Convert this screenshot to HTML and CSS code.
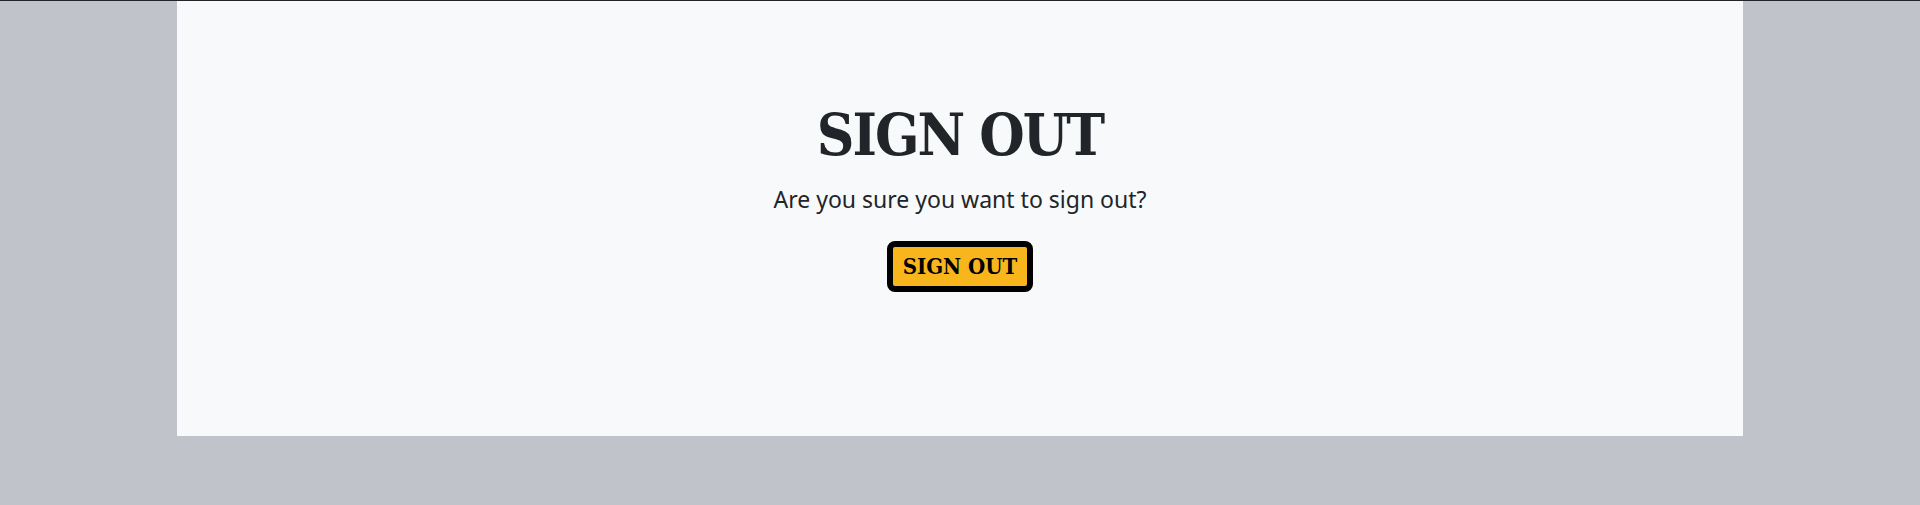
FILE: index.html
```html
<!DOCTYPE html>
<html>
<head>
<meta charset="utf-8">
<link rel="stylesheet" href="styles.css">
</head>
<body>
<div class="topline"></div>
<main class="panel">
  <h1 class="title">SIGN OUT</h1>
  <p class="lead">Are you sure you want to sign out?</p>
  <button class="btn">SIGN OUT</button>
</main>
</body>
</html>
```
FILE: styles.css
```css
html, body { margin: 0; padding: 0; }
body {
  background: #c0c3ca;
  font-family: "Noto Sans", sans-serif;
  color: #212529;
  height: 505px;
}
.topline { height: 1px; background: #212529; }
.panel {
  width: 1566px;
  height: 435px;
  margin: 0 auto;
  background: #f8f9fa;
  display: flex;
  flex-direction: column;
  align-items: center;
  padding-top: 100px;
  box-sizing: border-box;
}
.title {
  font-family: "DejaVu Serif", serif;
  font-stretch: condensed;
  font-weight: bold;
  font-size: 58px;
  letter-spacing: -2px;
  line-height: 1.2;
  margin: 0 0 12px;
}
.lead {
  font-size: 23px;
  font-weight: 400;
  margin: 0 0 26px;
}
.btn {
  font-family: "DejaVu Serif", serif;
  font-stretch: condensed;
  font-weight: bold;
  font-size: 22px;
  background: #f9b61c;
  color: #000;
  border: 6px solid #000;
  border-radius: 8px;
  padding: 4px 6px;
  width: 146px;
  height: 51px;
}
```
